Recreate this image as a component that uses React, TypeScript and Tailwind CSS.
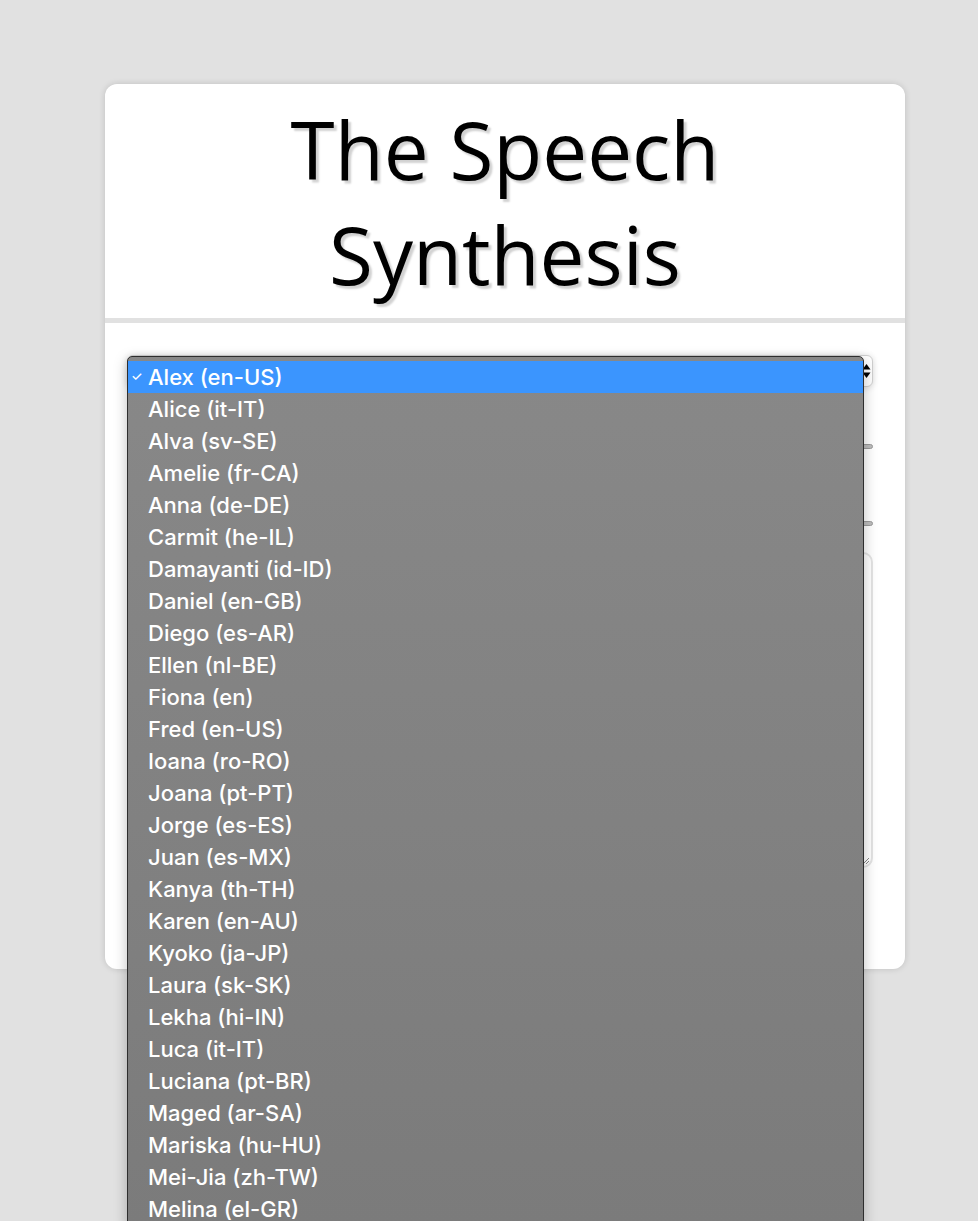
const voices = [
  "Alex (en-US)",
  "Alice (it-IT)",
  "Alva (sv-SE)",
  "Amelie (fr-CA)",
  "Anna (de-DE)",
  "Carmit (he-IL)",
  "Damayanti (id-ID)",
  "Daniel (en-GB)",
  "Diego (es-AR)",
  "Ellen (nl-BE)",
  "Fiona (en)",
  "Fred (en-US)",
  "Ioana (ro-RO)",
  "Joana (pt-PT)",
  "Jorge (es-ES)",
  "Juan (es-MX)",
  "Kanya (th-TH)",
  "Karen (en-AU)",
  "Kyoko (ja-JP)",
  "Laura (sk-SK)",
  "Lekha (hi-IN)",
  "Luca (it-IT)",
  "Luciana (pt-BR)",
  "Maged (ar-SA)",
  "Mariska (hu-HU)",
  "Mei-Jia (zh-TW)",
  "Melina (el-GR)",
  "Milena (ru-RU)",
];

const VoiceList = () => (
  <ul className="absolute left-0 top-[1px] z-10 w-[737px] h-[870px] overflow-hidden border border-[#2e2e2e] rounded-t-[5px] bg-gradient-to-b from-[#888888] to-[#7b7b7b] pt-[4px] shadow-[0_4px_14px_rgba(0,0,0,0.25)] font-['Inter',sans-serif] text-[22px] font-medium text-white">
    {voices.map((v, i) => (
      <li
        key={v}
        className={`relative flex h-[32px] items-center pl-[20px] ${
          i === 0 ? "bg-[#3b95fe]" : ""
        }`}
      >
        {i === 0 && (
          <span className="absolute left-[3px] top-[9px] text-[13px] leading-none">
            ✓
          </span>
        )}
        {v}
      </li>
    ))}
  </ul>
);

const Slider = () => (
  <div className="h-[5px] w-full rounded-full border border-[#9a9a9a] bg-[#bdbdbd]" />
);

// up/down arrows of the native select
const SelectArrows = () => (
  <svg width="9" height="16" viewBox="0 0 9 16" className="text-black">
    <path d="M4.5 1 L8.5 6.5 H0.5 Z" fill="currentColor" />
    <path d="M4.5 15 L8.5 9.5 H0.5 Z" fill="currentColor" />
  </svg>
);

export default function App() {
  return (
    <div className="min-h-screen bg-[#e1e1e1] pt-[84px] pb-[60px]">
      <div className="ml-[105px] w-[800px] rounded-[12px] bg-white shadow-[0_0_6px_rgba(0,0,0,0.15)]">
        <h1 className="border-b-[5px] border-[#e1e1e1] pt-[12px] pb-[12px] text-center font-['Open_Sans',sans-serif] text-[80px] leading-[105px] text-black [text-shadow:3px_3px_2px_rgba(0,0,0,0.18)]">
          The Speech
          <br />
          Synthesis
        </h1>
        <div className="pl-[22px] pr-[32px] pt-[32px] pb-[35px]">
          <div className="relative">
            <div className="flex h-[32px] w-full items-center justify-end rounded-[6px] border border-[#d0d0d0] bg-white pr-[1px] shadow-[0_1px_6px_rgba(0,0,0,0.15)]">
              <SelectArrows />
            </div>
            <VoiceList />
          </div>
          <div className="mt-[29px] flex flex-col gap-[4px] font-['Inter',sans-serif] text-[16px]">
            <label>Rate:</label>
            <Slider />
          </div>
          <div className="mt-[44px] flex flex-col gap-[4px] font-['Inter',sans-serif] text-[16px]">
            <label>Pitch:</label>
            <Slider />
          </div>
          <div className="relative mt-[26px] h-[316px] rounded-[10px] border-2 border-[#e4e4e4] bg-white">
            <svg
              width="8"
              height="8"
              viewBox="0 0 8 8"
              className="absolute right-[1px] bottom-[1px] text-[#888]"
            >
              <path d="M7 1 L1 7 M7 4 L4 7" stroke="currentColor" strokeWidth="1" />
            </svg>
          </div>
          <div className="mt-[16px] flex gap-[12px]">
            <button className="h-[50px] w-[200px] rounded-[6px] bg-[#e1e1e1] font-['Inter',sans-serif] text-[20px]">
              Speak
            </button>
            <button className="h-[50px] w-[200px] rounded-[6px] bg-[#e1e1e1] font-['Inter',sans-serif] text-[20px]">
              Stop!
            </button>
          </div>
        </div>
      </div>
    </div>
  );
}
